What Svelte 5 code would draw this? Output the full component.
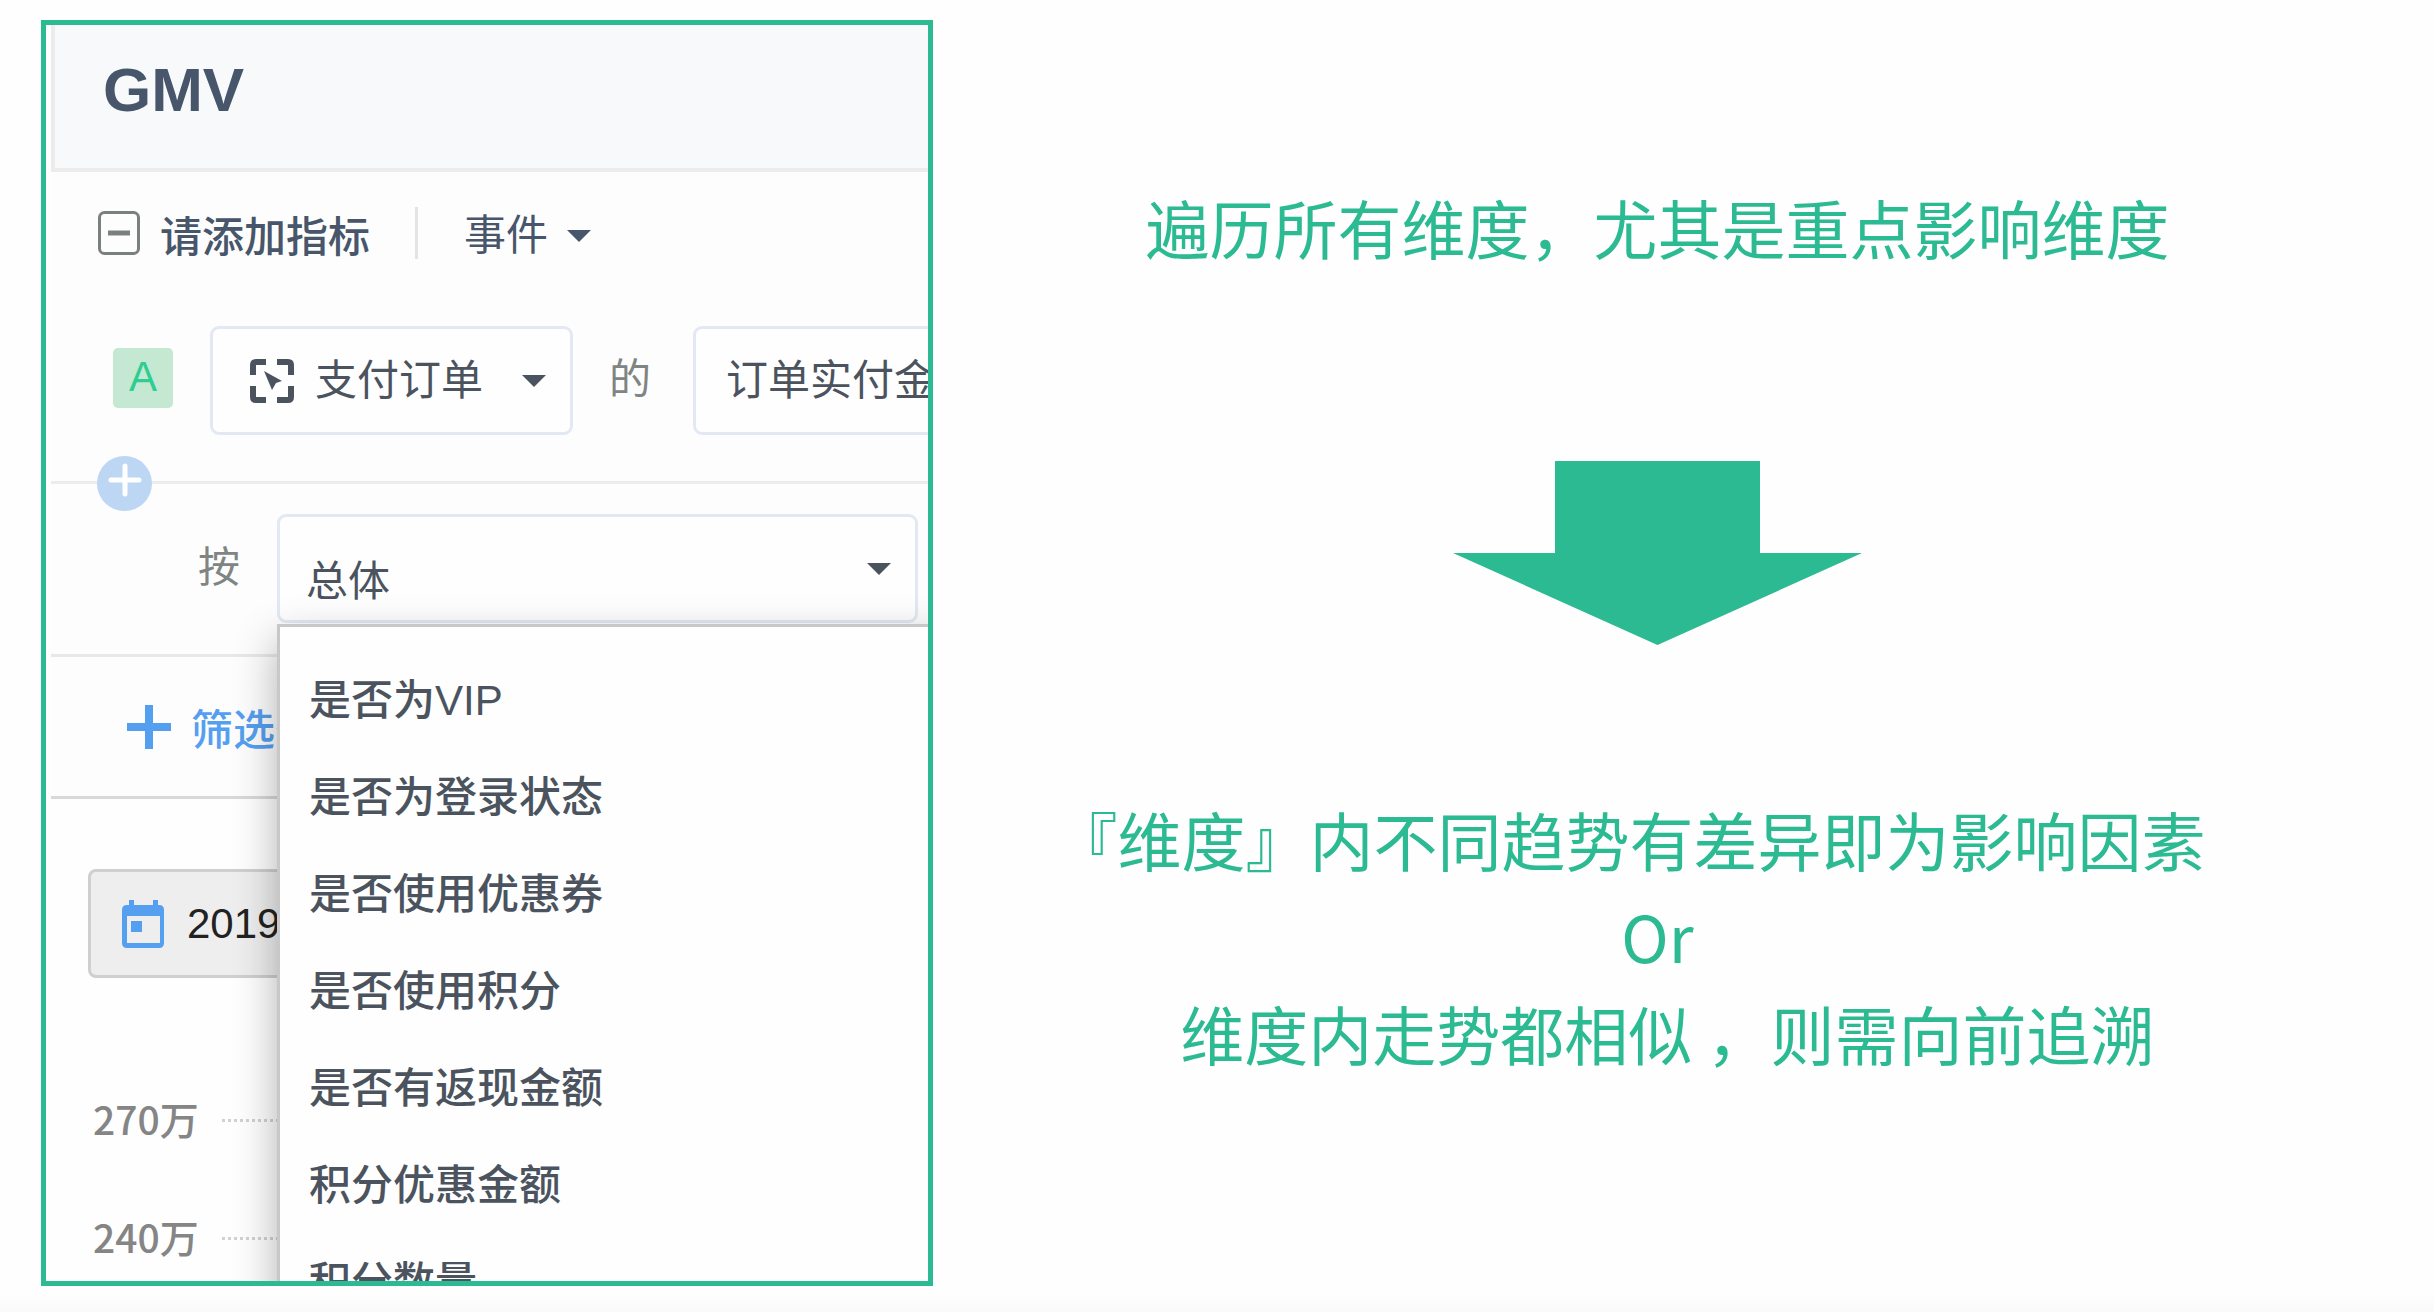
<script>
	const dimensions = [
		"是否为VIP",
		"是否为登录状态",
		"是否使用优惠券",
		"是否使用积分",
		"是否有返现金额",
		"积分优惠金额",
		"积分数量",
	];
	const ticks = ["270万", "240万"];

	let metricType = "事件";
	let event = "支付订单";
	let measure = "订单实付金额";
	let groupBy = "总体";
</script>

{#snippet caret()}
	<svg class="caret" viewBox="0 0 24 12" aria-hidden="true">
		<path d="M0 0h24L12 12z" fill="currentColor" />
	</svg>
{/snippet}

<main>
	<section class="panel">
		<div class="board">
			<header>
				<h1>GMV</h1>
			</header>

			<div class="metric">
				<div class="metric-title">
					<button class="collapse" aria-label="collapse">
						<svg viewBox="0 0 42 44">
							<rect x="1.5" y="1.5" width="39" height="41" rx="5" fill="none" stroke="currentColor" stroke-width="3" />
							<path d="M10 22h22" stroke="currentColor" stroke-width="5" />
						</svg>
					</button>
					<h2>请添加指标</h2>
					<span class="divider"></span>
					<label class="type">
						<select bind:value={metricType} aria-label="type">
							<option>事件</option>
						</select>
						{@render caret()}
					</label>
				</div>

				<div class="metric-row">
					<span class="badge">A</span>
					<label class="field event">
						<svg class="target" viewBox="0 0 44 44" aria-hidden="true">
							<path
								d="M3 16V6q0-3 3-3h10M27 3h11q3 0 3 3v10M41 27v11q0 3-3 3H27M16 41H6q-3 0-3-3V27"
								fill="none"
								stroke="currentColor"
								stroke-width="6"
							/>
							<path d="M14 12l18 10-6 2-4 7z" fill="currentColor" />
						</svg>
						<select bind:value={event} aria-label="event">
							<option>支付订单</option>
						</select>
						{@render caret()}
					</label>
					<span class="word">的</span>
					<label class="field measure">
						<select bind:value={measure} aria-label="measure">
							<option>订单实付金额</option>
						</select>
					</label>
				</div>

				<button class="add" aria-label="add">
					<svg viewBox="0 0 55 55">
						<path d="M28 10v28M14 24h28" stroke="#fff" stroke-width="5" stroke-linecap="round" />
					</svg>
				</button>
			</div>

			<div class="group">
				<label class="word" for="group-by">按</label>
				<div class="group-select">
					<div class="field wide">
						<select id="group-by" bind:value={groupBy}>
							<option>总体</option>
						</select>
						{@render caret()}
					</div>
					<!-- open list, lies over the rows below -->
					<ul class="menu">
						{#each dimensions as name}
							<li>
								<button on:click={() => (groupBy = "总体")}>{name}</button>
							</li>
						{/each}
					</ul>
				</div>
			</div>

			<div class="filter">
				<button>
					<svg viewBox="0 0 44 44" aria-hidden="true">
						<path d="M22 0v44M0 22h44" stroke="currentColor" stroke-width="8" />
					</svg>
					筛选条件
				</button>
			</div>
		</div>

		<div class="chart">
			<button class="date">
				<svg viewBox="0 0 42 48" aria-hidden="true">
					<path
						fill="currentColor"
						fill-rule="evenodd"
						d="M7 0h5v5h19V0h5v5h1q5 0 5 5v33q0 5-5 5H5q-5 0-5-5V10q0-5 5-5h2zM5 16v27h33V16zM9 21h11v11H9z"
					/>
				</svg>
				2019
			</button>
			<div class="axis">
				{#each ticks as tick}
					<div class="tick">
						<span>{tick}</span>
						<i></i>
					</div>
				{/each}
			</div>
		</div>
	</section>

	<section class="notes">
		<p>遍历所有维度，尤其是重点影响维度</p>
		<svg class="arrow" viewBox="0 0 409 184" aria-hidden="true">
			<path d="M102 0h205v92h102L204.500 184 0 92h102z" fill="currentColor" />
		</svg>
		<div class="conclusion">
			<p class="first">『维度』内不同趋势有差异即为影响因素</p>
			<p>Or</p>
			<p class="last">维度内走势都相似 ，则需向前追溯</p>
		</div>
	</section>
</main>

<style>
	:global(body) {
		background: #fefefe;
	}
	main {
		box-sizing: border-box;
		display: grid;
		grid-template-columns: minmax(0, 41fr) minmax(0, 69fr);
		min-height: 100vh;
		padding: 20px 0 26px 41px;
		background: linear-gradient(to top, #fafafa, #fefefe 20px);
		font-family: "Liberation Sans", "Noto Sans CJK SC", sans-serif;
		font-size: 42px;
		color: #4b545e;
	}
	h1,
	h2,
	p,
	ul {
		margin: 0;
		padding: 0;
	}
	button,
	select {
		margin: 0;
		padding: 0;
		border: 0;
		background: none;
		font: inherit;
		color: inherit;
		cursor: pointer;
	}
	select {
		appearance: none;
		outline: none;
	}
	svg {
		display: block;
		flex: none;
	}

	/* left: report panel */
	.panel {
		box-sizing: border-box;
		height: calc(100vh - 46px);
		overflow: hidden;
		border: 5px solid #2bba92;
		background: #fefefe;
	}
	.board {
		margin-left: 5px;
		background: #fdfdfd;
	}
	header {
		display: flex;
		align-items: center;
		box-sizing: border-box;
		height: 147px;
		padding: 0 48px 14px;
		border-left: 4px solid #ececec;
		border-bottom: 4px solid #ececec;
		background: #f8f9fb;
	}
	h1 {
		font-size: 62px;
		line-height: 72px;
		color: #47566a;
	}
	.metric {
		position: relative;
		border-bottom: 3px solid #ececec;
	}
	.metric-title {
		display: flex;
		align-items: center;
		height: 122px;
		padding-left: 47px;
		color: #47566a;
	}
	.collapse {
		color: #7a807d;
	}
	.collapse svg {
		width: 42px;
		height: 44px;
	}
	h2 {
		margin-left: 20px;
		font-size: 42px;
		font-weight: 500;
		white-space: nowrap;
	}
	.divider {
		width: 3px;
		height: 52px;
		margin: 0 46px 0 45px;
		background: #e2e4e6;
	}
	.type {
		display: flex;
		align-items: center;
		gap: 18px;
		padding-top: 5px;
	}
	.caret {
		width: 24px;
		height: 12px;
	}
	.metric-row {
		display: flex;
		align-items: center;
		padding: 32px 0 46px 62px;
	}
	.badge {
		flex: none;
		width: 60px;
		margin: 0 37px 5px 0;
		padding-bottom: 2px;
		border-radius: 5px;
		background: #c4e8d1;
		color: #2dce91;
		line-height: 58px;
		text-align: center;
	}
	.field {
		display: flex;
		align-items: center;
		box-sizing: border-box;
		height: 109px;
		padding: 0 24px 0 26px;
		border: 3px solid #e3e9f3;
		border-radius: 9px;
		background: #fefefe;
	}
	.field select {
		flex: 1;
		min-width: 0;
	}
	.event {
		flex: none;
		width: 363px;
		padding-left: 37px;
	}
	.target {
		width: 44px;
		height: 44px;
		margin-right: 21px;
	}
	.word {
		flex: none;
		padding-bottom: 10px;
		color: #7f8583;
	}
	.metric-row .word {
		margin: 0 42px 0 36px;
	}
	.measure {
		flex: none;
		width: 400px;
		padding-left: 30px;
	}
	.add {
		position: absolute;
		left: 46px;
		bottom: -30px;
		border-radius: 50%;
		background: #bdd6f4;
	}
	.add svg {
		width: 55px;
		height: 55px;
	}
	.group {
		display: flex;
		align-items: center;
		gap: 37px;
		padding: 30px 10px 31px 147px;
		border-bottom: 3px solid #e8e8e8;
	}
	.group-select {
		position: relative;
		flex: 1;
	}
	.wide select {
		padding-top: 26px;
	}
	.menu {
		position: absolute;
		z-index: 1;
		top: calc(100% + 1px);
		left: 0;
		box-sizing: border-box;
		width: 110%;
		padding: 25px 0;
		border: 3px solid #c8c8c8;
		background: #fefefe;
		box-shadow: 0 16px 40px rgba(0, 0, 0, 0.3);
		list-style: none;
	}
	.menu button {
		display: block;
		width: 100%;
		padding-left: 29px;
		font-weight: 500;
		line-height: 97px;
		text-align: left;
	}
	.filter {
		display: flex;
		height: 139px;
		padding-left: 76px;
		border-bottom: 3px solid #d8d8d8;
	}
	.filter button {
		display: flex;
		align-items: center;
		gap: 20px;
		font-weight: 500;
		color: #559ff0;
		white-space: nowrap;
	}
	.filter svg {
		width: 44px;
		height: 44px;
	}
	.chart {
		padding: 70px 0 0 42px;
	}
	.date {
		display: flex;
		align-items: center;
		gap: 23px;
		box-sizing: border-box;
		width: 400px;
		height: 109px;
		padding-left: 31px;
		border: 3px solid #cfcfcf;
		border-radius: 8px;
		background: #eee;
		color: #222;
	}
	.date svg {
		width: 42px;
		height: 48px;
		color: #559ff0;
	}
	.axis {
		margin-top: 83px;
		padding-left: 5px;
	}
	.tick {
		display: flex;
		align-items: center;
		gap: 23px;
		height: 118px;
		font-family: "Noto Sans CJK SC", sans-serif;
		font-size: 39px;
		font-weight: 500;
		line-height: 48px;
		color: #858585;
	}
	.tick span {
		padding-bottom: 4px;
	}
	.tick i {
		flex: 1;
		height: 3px;
		background: repeating-linear-gradient(to right, #d2d2d2 0 3px, transparent 3px 6px);
	}

	/* right: explanation */
	.notes {
		display: flex;
		flex-direction: column;
		align-items: center;
		padding: 158px 52px 0 0;
		font-family: "Noto Sans CJK SC", sans-serif;
		font-size: 64px;
		line-height: 97px;
		text-align: center;
		color: #2bba92;
	}
	.arrow {
		width: 409px;
		height: 184px;
		margin: 186px 0 145px;
	}
	.first {
		padding-right: 56px;
	}
	.last {
		padding-left: 20px;
	}
</style>
